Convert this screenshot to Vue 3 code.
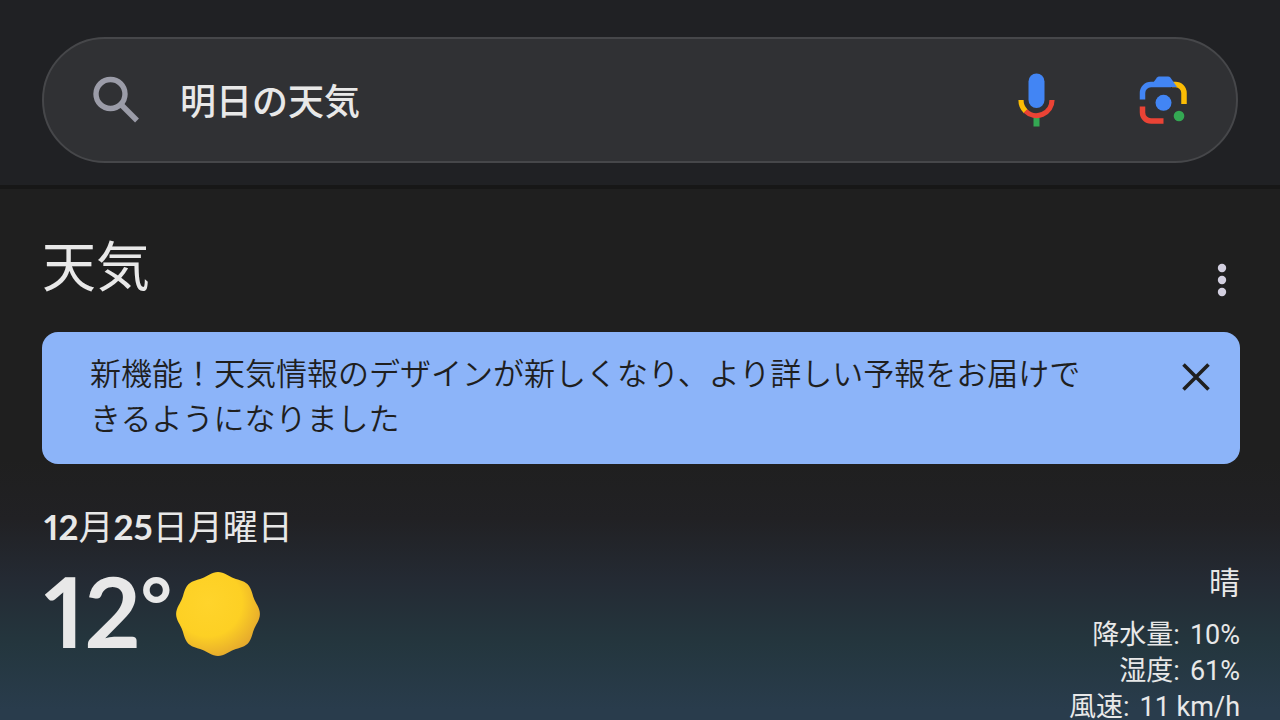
<script setup>
import { ref } from 'vue'

const query = ref('明日の天気')
const bannerOpen = ref(true)

const stats = [
  { label: '降水量', value: '10%' },
  { label: '湿度', value: '61%' },
  { label: '風速', value: '11 km/h' },
]

// Eight soft lobes around the disc of the sun
const sunPath =
  Array.from({ length: 120 }, (_, i) => {
    const a = (i / 120) * Math.PI * 2
    const r = 40.5 + 1.4 * Math.cos(a * 8)
    return `${i ? 'L' : 'M'}${(42 + r * Math.cos(a)).toFixed(2)} ${(42 + r * Math.sin(a)).toFixed(2)}`
  }).join('') + 'Z'
</script>

<template>
  <div class="page">
    <header class="top">
      <form class="search" role="search" @submit.prevent>
        <button class="icon-btn" type="submit" aria-label="検索">
          <svg width="48" height="48" viewBox="0 0 48 48" fill="none" stroke="#9b9ca8">
            <circle cx="18.500" cy="18" r="14.500" stroke-width="5.400" />
            <path d="M28.500 28 45 44.500" stroke-width="5.500" />
          </svg>
        </button>
        <input v-model="query" class="query" type="text" aria-label="検索キーワード" />
        <button class="icon-btn mic" type="button" aria-label="音声検索">
          <svg width="38" height="54" viewBox="0 0 38 54" fill="none">
            <rect x="10.500" y=".5" width="16" height="34.500" rx="8" fill="#4285f4" />
            <path d="M15.500 44h6v9.500h-6z" fill="#34a853" />
            <path d="M3 27A15.500 15.500 0 0 0 7.700 38.300" stroke="#fbbc04" stroke-width="5.200" />
            <path d="M7.500 38A15.500 15.500 0 0 0 34 27" stroke="#ea4335" stroke-width="5.200" />
          </svg>
        </button>
        <button class="icon-btn" type="button" aria-label="画像で検索">
          <svg width="50" height="50" viewBox="0 0 50 50" fill="none">
            <path d="M34 9.500h3.500a8.500 8.500 0 0 1 8.500 8.500v11" stroke="#fbbc04" stroke-width="5.500" />
            <path d="M4.500 24.500v-6.500a8.500 8.500 0 0 1 8.500-8.500H33" stroke="#4285f4" stroke-width="5.500" />
            <path d="M15 8 19 2.500Q20 1.500 21 1.500h9q1.500 0 2.500 1.200L39 12H15z" fill="#4285f4" />
            <path d="M4.500 31.500v6a8.500 8.500 0 0 0 8.500 8.500h12.500" stroke="#ea4335" stroke-width="5.500" />
            <circle cx="25.500" cy="27.800" r="8" fill="#4285f4" />
            <circle cx="41" cy="41" r="5.300" fill="#34a853" />
          </svg>
        </button>
      </form>
    </header>

    <main class="weather">
      <div class="heading">
        <h1>天気</h1>
        <button class="icon-btn more" type="button" aria-label="その他">
          <svg width="10" height="34" viewBox="0 0 10 34" fill="#d2cfdf">
            <circle cx="5" cy="5" r="4.200" />
            <circle cx="5" cy="17" r="4.200" />
            <circle cx="5" cy="29" r="4.200" />
          </svg>
        </button>
      </div>

      <section v-if="bannerOpen" class="banner">
        <p>新機能！天気情報のデザインが新しくなり、より詳しい予報をお届けできるようになりました</p>
        <button class="icon-btn close" type="button" aria-label="閉じる" @click="bannerOpen = false">
          <svg width="28" height="28" viewBox="0 0 28 28" stroke="#1f1f1f" stroke-width="3.600">
            <path d="M1.500 1.500 26.500 26.500M26.500 1.500 1.500 26.500" />
          </svg>
        </button>
      </section>

      <h2 class="date"><b>12</b>月<b>25</b>日月曜日</h2>
      <div class="now">
        <div class="current">
          <div class="temp">12<span class="degree">°</span></div>
          <svg width="84" height="84" viewBox="0 0 84 84" role="img" aria-label="晴">
            <defs>
              <radialGradient id="sun" cx="0.380" cy="0.360" r="0.740">
                <stop offset="0" stop-color="#ffd42b" />
                <stop offset="0.550" stop-color="#fdd024" />
                <stop offset="1" stop-color="#dfa02f" />
              </radialGradient>
            </defs>
            <path :d="sunPath" fill="url(#sun)" />
          </svg>
        </div>
        <div class="details">
          <p class="condition">晴</p>
          <ul>
            <li v-for="s in stats" :key="s.label">
              <span>{{ s.label }}:</span>
              <span>{{ s.value }}</span>
            </li>
          </ul>
        </div>
      </div>
    </main>
  </div>
</template>

<style>
html {
  background: #1f1f1f;
  overflow: hidden;
}
</style>

<style scoped>
.page {
  color: #e8e8e8;
  font-family: Roboto, "Noto Sans CJK JP", sans-serif;
}

h1,
h2,
p,
ul {
  margin: 0;
  padding: 0;
  font-weight: 400;
}

svg {
  display: block;
}

.icon-btn {
  flex: none;
  padding: 0;
  border: 0;
  background: none;
  cursor: pointer;
}

.top {
  padding: 37px 42px 22px;
  background: #202124;
  border-bottom: 4px solid #171717;
}

.search {
  display: flex;
  align-items: center;
  box-sizing: border-box;
  height: 126px;
  padding: 0 48px;
  border: 2px solid #46474a;
  border-radius: 63px;
  background: #303134;
}

.query {
  flex: 1;
  min-width: 0;
  margin: 0 40px;
  padding: 0 0 2px;
  border: 0;
  outline: 0;
  background: none;
  color: #e8e8e8;
  font: 500 36px/54px "Noto Sans CJK JP", sans-serif;
}

.mic {
  margin-right: 82px;
}

.weather {
  padding: 40px 40px 0 42px;
  background: linear-gradient(#1f1f1f 0, #1f1f1f 270px, #212124 330px, #242a33 390px, #24363e 455px, #293c4c 520px);
}

.heading {
  display: flex;
  justify-content: space-between;
  padding-right: 13px;
}

h1 {
  font-size: 54px;
  line-height: 80px;
}

.more {
  align-self: flex-end;
  margin-bottom: 12px;
}

.banner {
  display: flex;
  align-items: flex-start;
  justify-content: space-between;
  margin-top: 23px;
  padding: 20px 30px 22px 48px;
  border-radius: 16px;
  background: #8cb4f9;
  color: #1f1f1f;
}

.banner p {
  flex: 0 1 1004px;
  font-size: 31px;
  font-weight: 350;
  line-height: 45px;
}

.close {
  margin-top: 11px;
}

.date {
  margin-top: 36px;
  padding-left: 2px;
  font: 400 35px/52px Lato, "Noto Sans CJK JP", sans-serif;
  font-variant-numeric: proportional-nums;
}

.date b {
  font-weight: 700;
}

.now {
  display: flex;
  justify-content: space-between;
  align-items: flex-start;
}

.current {
  display: flex;
  align-items: center;
  gap: 4px;
  margin-top: 14px;
  padding-left: 2px;
}

.temp {
  display: flex;
  align-items: flex-start;
  margin-bottom: 8px;
  font: 700 98px/88px Lato, sans-serif;
  font-variant-numeric: proportional-nums;
}

.degree {
  font-size: 76px;
  line-height: 76px;
}

.details {
  margin-top: 9px;
  text-align: right;
}

.condition {
  font-size: 31px;
  line-height: 46px;
}

.details ul {
  margin-top: 10px;
  list-style: none;
  font-size: 27px;
  line-height: 36px;
}

.details li {
  display: flex;
  justify-content: flex-end;
  gap: 10px;
}
</style>
